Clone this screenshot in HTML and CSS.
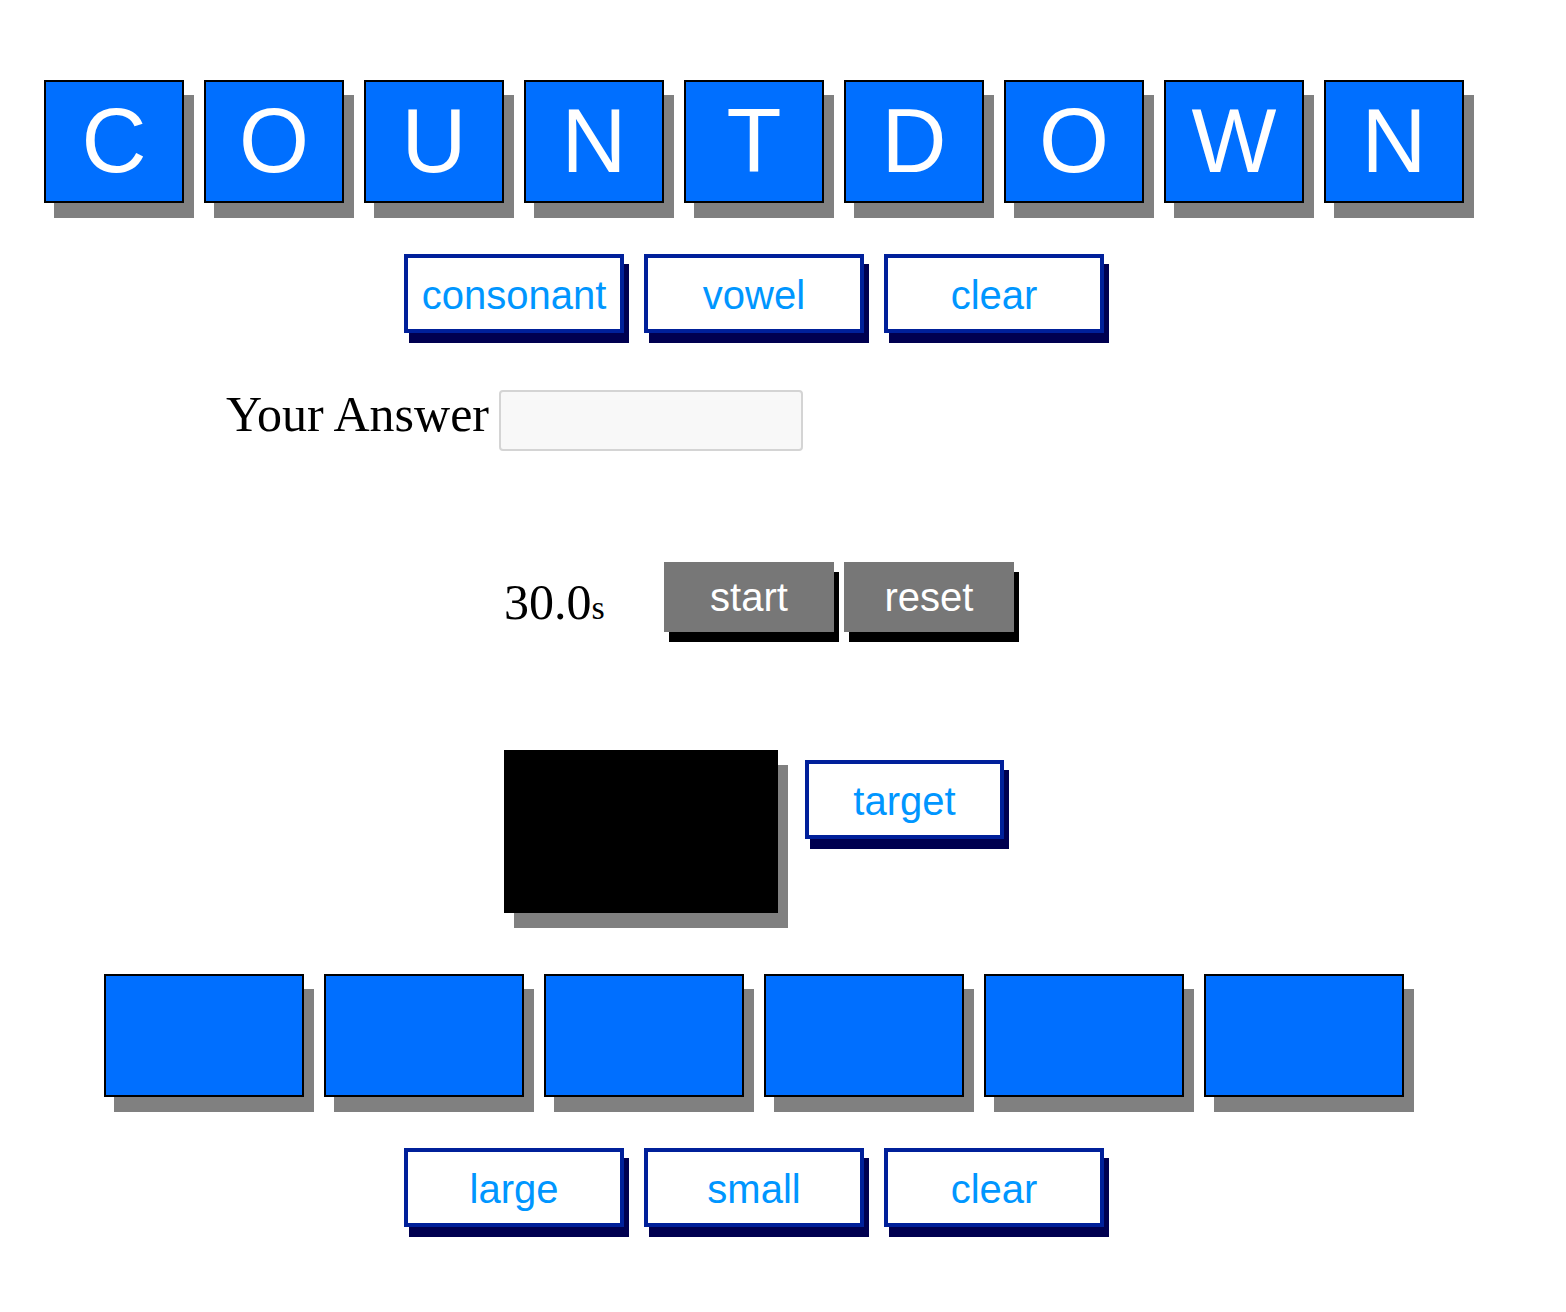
FILE: index.html
```html
<!DOCTYPE html>
<html>
<head>
<meta charset="utf-8">
<title>Countdown</title>
<link rel="stylesheet" href="styles.css">
</head>
<body>
<div class="page">
  <div class="letters">
    <div class="tile">C</div>
    <div class="tile">O</div>
    <div class="tile">U</div>
    <div class="tile">N</div>
    <div class="tile">T</div>
    <div class="tile">D</div>
    <div class="tile">O</div>
    <div class="tile">W</div>
    <div class="tile">N</div>
  </div>
  <div class="controls controls-letters">
    <button class="btn">consonant</button>
    <button class="btn">vowel</button>
    <button class="btn">clear</button>
  </div>
  <div class="answer">
    <label class="answer-label" for="ans">Your Answer</label>
    <input id="ans" class="answer-input" type="text">
  </div>
  <div class="timer-row">
    <div class="timer"><span class="timer-num">30.0</span><span class="timer-unit">s</span></div>
    <div class="timer-buttons">
      <button class="gbtn">start</button>
      <button class="gbtn">reset</button>
    </div>
  </div>
  <div class="target-row">
    <div class="target-box"></div>
    <button class="btn btn-target">target</button>
  </div>
  <div class="numbers">
    <div class="ntile"></div>
    <div class="ntile"></div>
    <div class="ntile"></div>
    <div class="ntile"></div>
    <div class="ntile"></div>
    <div class="ntile"></div>
  </div>
  <div class="controls controls-numbers">
    <button class="btn">large</button>
    <button class="btn">small</button>
    <button class="btn">clear</button>
  </div>
</div>
</body>
</html>
```

FILE: styles.css
```css
html, body {
  margin: 0;
  padding: 0;
  background: #ffffff;
}

.page {
  width: 1508px;
  padding-top: 80px;
  padding-bottom: 40px;
  font-family: "Liberation Sans", Arial, sans-serif;
}

.letters {
  display: flex;
  justify-content: center;
  gap: 20px;
}

.tile {
  box-sizing: border-box;
  width: 140px;
  height: 123px;
  background: #006fff;
  border: 2px solid #000000;
  box-shadow: 10px 15px 0 #808080;
  color: #ffffff;
  font-family: "Liberation Sans", Arial, sans-serif;
  font-size: 90px;
  line-height: 119px;
  text-align: center;
}

.controls {
  display: flex;
  justify-content: center;
  gap: 20px;
}

.controls-letters {
  margin-top: 51px;
}

.controls-numbers {
  margin-top: 51px;
}

.btn {
  box-sizing: border-box;
  width: 220px;
  height: 79px;
  margin: 0;
  padding: 4px 0 0 0;
  background: #ffffff;
  border: 4px solid #00209a;
  box-shadow: 5px 10px 0 #000050;
  color: #0096ff;
  font-family: "Liberation Sans", Arial, sans-serif;
  font-size: 40px;
  line-height: 67px;
  text-align: center;
  border-radius: 0;
}

.answer {
  display: flex;
  align-items: center;
  gap: 10px;
  margin-top: 57px;
  padding-left: 226px;
}

.answer-label {
  font-family: "Liberation Serif", "Times New Roman", serif;
  font-size: 50px;
  color: #000000;
  line-height: 57px;
  position: relative;
  top: -6px;
}

.answer-input {
  box-sizing: border-box;
  width: 304px;
  height: 61px;
  margin: 0;
  background: #f8f8f8;
  border: 2px solid #d4d4d4;
  border-radius: 4px;
  font-size: 30px;
  padding: 0 10px;
  outline: none;
}

.timer-row {
  display: flex;
  align-items: center;
  margin-top: 111px;
  padding-left: 504px;
}

.timer {
  width: 160px;
  font-family: "Liberation Serif", "Times New Roman", serif;
  color: #000000;
  line-height: 1;
  position: relative;
  top: 5px;
}

.timer-num {
  font-size: 50px;
}

.timer-unit {
  font-size: 34px;
}

.timer-buttons {
  display: flex;
  gap: 10px;
}

.gbtn {
  box-sizing: border-box;
  width: 170px;
  height: 70px;
  margin: 0;
  padding: 0;
  border: none;
  border-radius: 0;
  background: #777777;
  box-shadow: 5px 10px 0 #000000;
  color: #ffffff;
  font-family: "Liberation Sans", Arial, sans-serif;
  font-size: 40px;
  line-height: 70px;
  text-align: center;
}

.target-row {
  display: flex;
  align-items: flex-start;
  gap: 27px;
  margin-top: 118px;
  padding-left: 504px;
}

.target-box {
  width: 274px;
  height: 163px;
  background: #000000;
  box-shadow: 10px 15px 0 #808080;
}

.btn-target {
  width: 199px;
  margin-top: 10px;
}

.numbers {
  display: flex;
  justify-content: center;
  gap: 20px;
  margin-top: 61px;
}

.ntile {
  box-sizing: border-box;
  width: 200px;
  height: 123px;
  background: #006fff;
  border: 2px solid #000000;
  box-shadow: 10px 15px 0 #808080;
}
```
